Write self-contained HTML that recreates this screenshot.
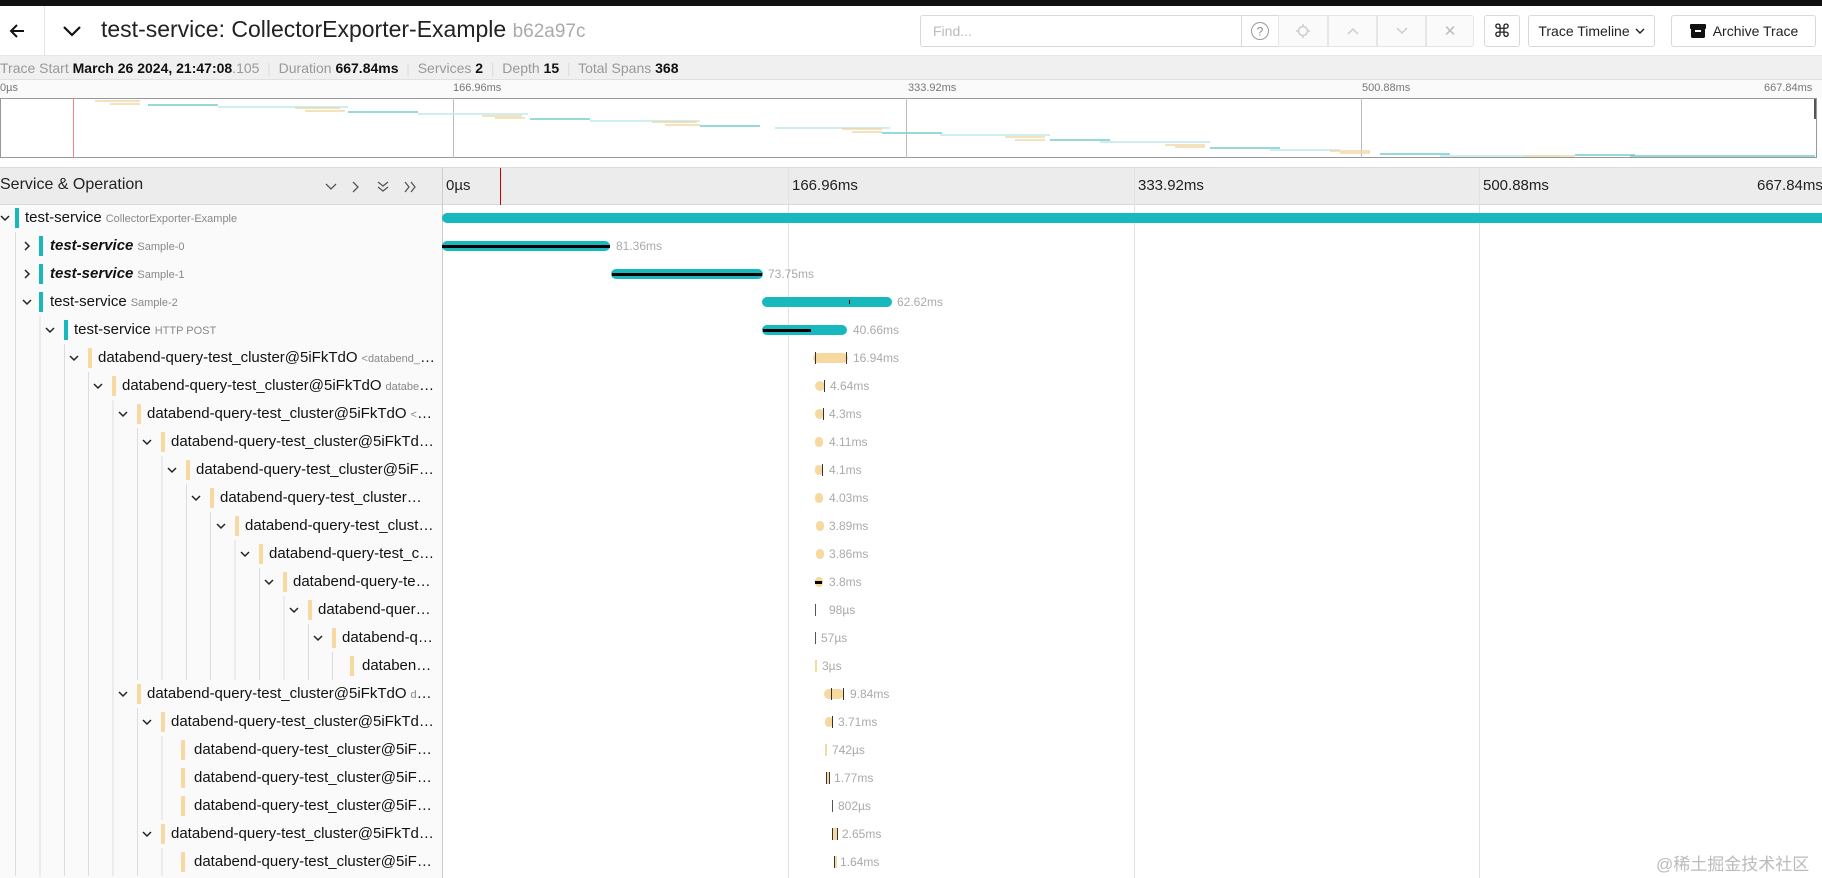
<!DOCTYPE html>
<html><head><meta charset="utf-8"><style>
*{box-sizing:border-box;margin:0;padding:0}
body{width:1822px;height:878px;overflow:hidden;background:#fff;font-family:"Liberation Sans",sans-serif;position:relative;color:#000}
.a{position:absolute}
.btn{position:absolute;top:15px;height:32px;border:1px solid #d9d9d9;border-radius:3px;background:#fff;font-size:15px;display:flex;align-items:center;justify-content:center;color:#222}
.seg{position:absolute;top:15px;height:32px;border:1px solid #e6e6e6;background:#fafafa;color:#bbb;display:flex;align-items:center;justify-content:center;font-size:15px}
.r{position:absolute;left:0;width:1822px;height:28px}
.cb{position:absolute;top:4px;width:4px;height:20px}
.tx{position:absolute;top:5px;font-size:15px;white-space:nowrap;overflow:hidden;text-overflow:ellipsis;color:#111}
.op{font-size:11px;color:#888;margin-left:4px}
.gl{position:absolute;top:0;height:28px;background:repeating-linear-gradient(to right,#ddd 0 1px,transparent 1px 24.4px)}
.ch{position:absolute;top:9px;width:10px;height:10px}
.bar{position:absolute;top:9px;height:10px;border-radius:5px}
.t{background:#17b8be}.y{background:#f7d9a0}
.lb{position:absolute;top:7px;font-size:12px;color:#aaa}
.bl{position:absolute;top:13px;height:3px;background:#000}
.mk{position:absolute;top:8px;width:1px;height:12px;background:#333}
.tick{position:absolute;top:0;width:1px;background:#e2e2e2}
</style></head><body>
<div class="a" style="left:0;top:0;width:1822px;height:6px;background:#111"></div>
<div class="a" style="left:0;top:6px;width:1822px;height:50px;background:#fff;border-bottom:1px solid #e8e8e8"></div>
<div class="a" style="left:44px;top:6px;width:1px;height:50px;background:#e4e4e4"></div>
<svg class="a" style="left:8px;top:22px" width="18" height="18" viewBox="0 0 18 18"><path d="M16 9H3M9 3L3 9l6 6" stroke="#111" stroke-width="2" fill="none"/></svg>
<svg class="a" style="left:62px;top:24px" width="20" height="14" viewBox="0 0 20 14"><path d="M2 3l8 8 8-8" stroke="#111" stroke-width="2.2" fill="none"/></svg>
<div class="a" style="left:101px;top:16px;font-size:23px;color:#222;white-space:nowrap">test-service: CollectorExporter-Example <span style="color:#aaa;font-size:19px">b62a97c</span></div>
<div class="btn" style="left:920px;width:322px;justify-content:flex-start;padding-left:12px;color:#bbb;font-size:14px;border-radius:3px 0 0 3px">Find...</div>
<div class="btn" style="left:1241px;width:38px;border-radius:0;color:#888"><svg width="20" height="20" viewBox="0 0 20 20"><circle cx="10" cy="10" r="8.5" stroke="#999" fill="none"/><text x="10" y="14.5" font-size="12" text-anchor="middle" fill="#888" font-family="Liberation Sans">?</text></svg></div>
<div class="seg" style="left:1278px;width:50px"><svg width="16" height="16" viewBox="0 0 16 16"><circle cx="8" cy="8" r="4.5" stroke="#ccc" fill="none" stroke-width="1.5"/><path d="M8 1v3M8 12v3M1 8h3M12 8h3" stroke="#ccc" stroke-width="1.5"/></svg></div>
<div class="seg" style="left:1328px;width:49px"><svg width="14" height="10"><path d="M2 8l5-5 5 5" stroke="#ccc" stroke-width="1.5" fill="none"/></svg></div>
<div class="seg" style="left:1377px;width:49px"><svg width="14" height="10"><path d="M2 2l5 5 5-5" stroke="#ccc" stroke-width="1.5" fill="none"/></svg></div>
<div class="seg" style="left:1426px;width:48px;border-radius:0 3px 3px 0">✕</div>
<div class="btn" style="left:1484px;width:36px;font-size:18px">⌘</div>
<div class="btn" style="left:1528px;width:127px;font-size:14px">Trace Timeline <svg style="margin-left:5px" width="10" height="8"><path d="M1 2l4 4 4-4" stroke="#222" stroke-width="1.4" fill="none"/></svg></div>
<div class="btn" style="left:1671px;width:145px;font-size:14px"><svg style="margin-right:6px" width="18" height="18" viewBox="0 0 18 18"><rect x="1" y="2" width="16" height="5" rx="1" fill="#111"/><rect x="2" y="6" width="14" height="10" rx="1.5" fill="#111"/><rect x="6" y="8" width="6" height="2" fill="#fff"/></svg>Archive Trace</div>
<div class="a" style="left:0;top:56px;width:1822px;height:24px;background:#f0f0f0;border-bottom:1px solid #e0e0e0"></div>
<div class="a" style="left:0;top:60px;font-size:14px;color:#999;white-space:nowrap">Trace Start <b style="color:#111">March 26 2024, 21:47:08</b>.105 <span style="color:#ddd">&nbsp;|&nbsp;</span> Duration <b style="color:#111">667.84ms</b> <span style="color:#ddd">&nbsp;|&nbsp;</span> Services <b style="color:#111">2</b> <span style="color:#ddd">&nbsp;|&nbsp;</span> Depth <b style="color:#111">15</b> <span style="color:#ddd">&nbsp;|&nbsp;</span> Total Spans <b style="color:#111">368</b></div>
<div class="a" style="left:0;top:80px;width:1822px;height:18px;background:#fafafa"></div>
<div class="a" style="left:0;top:82px;font-size:11px;color:#777">0µs</div>
<div class="a" style="left:453px;top:82px;font-size:11px;color:#777">166.96ms</div>
<div class="a" style="left:908px;top:82px;font-size:11px;color:#777">333.92ms</div>
<div class="a" style="left:1362px;top:82px;font-size:11px;color:#777">500.88ms</div>
<div class="a" style="left:1764px;top:82px;font-size:11px;color:#777">667.84ms</div>
<div class="a" style="left:0;top:98px;width:1817px;height:60px;border:1px solid #999;background:#fff"></div>
<div class="a" style="left:453px;top:98px;width:1px;height:60px;background:#bbb"></div>
<div class="a" style="left:906px;top:98px;width:1px;height:60px;background:#bbb"></div>
<div class="a" style="left:1361px;top:98px;width:1px;height:60px;background:#bbb"></div>
<div class="a" style="left:73px;top:98px;width:1px;height:60px;background:#e88"></div>
<div class="a" style="left:1814px;top:99px;width:2px;height:20px;background:#555"></div>
<svg class="a" style="left:0;top:98px" width="1822" height="60">
<g stroke-width="1.5" fill="none">
<path d="M95 3h45M110 6h30" stroke="#f0d9a8"/><path d="M148 7h70" stroke="#7cc"/><path d="M218 9h130" stroke="#bdeaea"/>
<path d="M295 10h45M305 13h40" stroke="#f0d9a8"/><path d="M348 14h70" stroke="#7cc"/><path d="M418 16h110" stroke="#bdeaea"/>
<path d="M482 18h40M495 20h30" stroke="#f0d9a8"/><path d="M530 21h60" stroke="#7cc"/><path d="M590 23h110" stroke="#bdeaea"/>
<path d="M652 24h45M665 27h35" stroke="#f0d9a8"/><path d="M700 28h60" stroke="#7cc"/><path d="M775 30h115" stroke="#bdeaea"/>
<path d="M842 31h40M852 34h30" stroke="#f0d9a8"/><path d="M882 35h60" stroke="#7cc"/><path d="M940 37h110" stroke="#bdeaea"/>
<path d="M1005 39h40M1015 42h30" stroke="#f0d9a8"/><path d="M1050 42h60" stroke="#7cc"/><path d="M1100 44h110" stroke="#bdeaea"/>
<path d="M1165 47h40M1175 49h30" stroke="#f0d9a8"/><path d="M1210 50h70" stroke="#7cc"/><path d="M1270 52h70" stroke="#bdeaea"/>
<path d="M1330 53h40M1340 55h30" stroke="#f0d9a8"/><path d="M1380 56h70" stroke="#7cc"/><path d="M1440 58h120" stroke="#bdeaea"/>
<path d="M1525 58h50" stroke="#f0d9a8"/><path d="M1575 57h60" stroke="#7cc"/><path d="M1630 58h185" stroke="#7cc"/>
</g></svg>
<div class="a" style="left:0;top:167px;width:1822px;height:38px;background:#ececec;border-top:1px solid #ddd;border-bottom:1px solid #d8d8d8"></div>
<div class="a" style="left:0;top:176px;font-size:16px;color:#222">Service &amp; Operation</div>
<svg class="a" style="left:325px;top:180px" width="100" height="14" viewBox="0 0 100 14">
<g stroke="#555" stroke-width="1.3" fill="none"><path d="M1 4l5 5 5-5"/><path d="M28 2l5 5-5 5"/><path d="M53 2l5 4 5-4M53 7l5 4 5-4"/><path d="M80 2l4 5-4 5M86 2l4 5-4 5"/></g></svg>
<div class="a" style="left:442px;top:167px;width:1px;height:711px;background:#ccc"></div>
<div class="a" style="left:446px;top:177px;font-size:15px;color:#222">0µs</div>
<div class="a" style="left:792px;top:177px;font-size:15px;color:#222">166.96ms</div>
<div class="a" style="left:1138px;top:177px;font-size:15px;color:#222">333.92ms</div>
<div class="a" style="left:1483px;top:177px;font-size:15px;color:#222">500.88ms</div>
<div class="a" style="left:1757px;top:177px;font-size:15px;color:#222">667.84ms</div>
<div class="a" style="left:500px;top:168px;width:1px;height:37px;background:#c00"></div>
<div class="tick" style="left:788px;top:168px;height:710px"></div>
<div class="tick" style="left:1134px;top:168px;height:710px"></div>
<div class="tick" style="left:1479px;top:168px;height:710px"></div>
<div class="a" style="left:0;top:205px;width:442px;height:673px;background:#fafafa"></div>

<div class="r" style="top:204px"><svg class="ch" style="left:0"><path d="M1 3l4 4 4-4" stroke="#222" stroke-width="1.5" fill="none"/></svg><div class="cb t" style="left:15px"></div><div class="tx" style="left:25px;width:412px">test-service<span class="op">CollectorExporter-Example</span></div><div class="bar t" style="left:442px;width:1385px"></div></div>

<div class="r" style="top:232px"><div class="gl" style="left:15px;width:2px"></div><svg class="ch" style="left:22px"><path d="M3 1l4 4-4 4" stroke="#222" stroke-width="1.5" fill="none"/></svg><div class="cb t" style="left:39px"></div><div class="tx" style="left:50px;width:387px"><b><i>test-service</i></b><span class="op">Sample-0</span></div><div class="bar t" style="left:442px;width:168px"></div><div class="bl" style="left:442px;width:168px"></div><div class="lb" style="left:616px">81.36ms</div></div>

<div class="r" style="top:260px"><div class="gl" style="left:15px;width:2px"></div><svg class="ch" style="left:22px"><path d="M3 1l4 4-4 4" stroke="#222" stroke-width="1.5" fill="none"/></svg><div class="cb t" style="left:39px"></div><div class="tx" style="left:50px;width:387px"><b><i>test-service</i></b><span class="op">Sample-1</span></div><div class="bar t" style="left:611px;width:152px"></div><div class="bl" style="left:612px;width:150px"></div><div class="lb" style="left:768px">73.75ms</div></div>

<div class="r" style="top:288px"><div class="gl" style="left:15px;width:2px"></div><svg class="ch" style="left:22px"><path d="M1 3l4 4 4-4" stroke="#222" stroke-width="1.5" fill="none"/></svg><div class="cb t" style="left:39px"></div><div class="tx" style="left:50px;width:387px">test-service<span class="op">Sample-2</span></div><div class="bar t" style="left:762px;width:130px"></div><div class="mk" style="left:849px;top:12px;height:4px;background:#000"></div><div class="lb" style="left:897px">62.62ms</div></div>

<div class="r" style="top:316px"><div class="gl" style="left:15px;width:26px"></div><svg class="ch" style="left:45px"><path d="M1 3l4 4 4-4" stroke="#222" stroke-width="1.5" fill="none"/></svg><div class="cb t" style="left:64px"></div><div class="tx" style="left:74px;width:363px">test-service<span class="op">HTTP POST</span></div><div class="bar t" style="left:762px;width:85px"></div><div class="bl" style="left:763px;width:48px"></div><div class="lb" style="left:853px">40.66ms</div></div>

<div class="r" style="top:344px"><div class="gl" style="left:15px;width:51px"></div><svg class="ch" style="left:69px"><path d="M1 3l4 4 4-4" stroke="#222" stroke-width="1.5" fill="none"/></svg><div class="cb y" style="left:88px"></div><div class="tx" style="left:98px;width:339px">databend-query-test_cluster@5iFkTdO<span class="op">&lt;databend_query::servers::http</span></div><div class="bar y" style="left:813px;width:35px"></div><div class="mk" style="left:815px"></div><div class="mk" style="left:846px"></div><div class="lb" style="left:853px">16.94ms</div></div>

<div class="r" style="top:372px"><div class="gl" style="left:15px;width:75px"></div><svg class="ch" style="left:93px"><path d="M1 3l4 4 4-4" stroke="#222" stroke-width="1.5" fill="none"/></svg><div class="cb y" style="left:112px"></div><div class="tx" style="left:122px;width:315px">databend-query-test_cluster@5iFkTdO<span class="op">databend_query</span></div><div class="bar y" style="left:815px;width:10px"></div><div class="mk" style="left:824px"></div><div class="lb" style="left:830px">4.64ms</div></div>

<div class="r" style="top:400px"><div class="gl" style="left:15px;width:100px"></div><svg class="ch" style="left:118px"><path d="M1 3l4 4 4-4" stroke="#222" stroke-width="1.5" fill="none"/></svg><div class="cb y" style="left:137px"></div><div class="tx" style="left:147px;width:290px">databend-query-test_cluster@5iFkTdO<span class="op">&lt;databend</span></div><div class="bar y" style="left:815px;width:9px"></div><div class="mk" style="left:823px"></div><div class="lb" style="left:829px">4.3ms</div></div>

<div class="r" style="top:428px"><div class="gl" style="left:15px;width:124px"></div><svg class="ch" style="left:142px"><path d="M1 3l4 4 4-4" stroke="#222" stroke-width="1.5" fill="none"/></svg><div class="cb y" style="left:161px"></div><div class="tx" style="left:171px;width:266px">databend-query-test_cluster@5iFkTdO<span class="op">databend</span></div><div class="bar y" style="left:815px;width:8px"></div><div class="lb" style="left:829px">4.11ms</div></div>

<div class="r" style="top:456px"><div class="gl" style="left:15px;width:149px"></div><svg class="ch" style="left:167px"><path d="M1 3l4 4 4-4" stroke="#222" stroke-width="1.5" fill="none"/></svg><div class="cb y" style="left:186px"></div><div class="tx" style="left:196px;width:241px">databend-query-test_cluster@5iFkTdO</div><div class="bar y" style="left:815px;width:8px"></div><div class="mk" style="left:822px"></div><div class="lb" style="left:829px">4.1ms</div></div>

<div class="r" style="top:484px"><div class="gl" style="left:15px;width:173px"></div><svg class="ch" style="left:191px"><path d="M1 3l4 4 4-4" stroke="#222" stroke-width="1.5" fill="none"/></svg><div class="cb y" style="left:210px"></div><div class="tx" style="left:220px;width:217px">databend-query-test_cluster@5iFkTdO</div><div class="bar y" style="left:815px;width:8px"></div><div class="lb" style="left:829px">4.03ms</div></div>

<div class="r" style="top:512px"><div class="gl" style="left:15px;width:198px"></div><svg class="ch" style="left:216px"><path d="M1 3l4 4 4-4" stroke="#222" stroke-width="1.5" fill="none"/></svg><div class="cb y" style="left:235px"></div><div class="tx" style="left:245px;width:192px">databend-query-test_cluster@5iFkTdO</div><div class="bar y" style="left:816px;width:8px"></div><div class="lb" style="left:829px">3.89ms</div></div>

<div class="r" style="top:540px"><div class="gl" style="left:15px;width:222px"></div><svg class="ch" style="left:240px"><path d="M1 3l4 4 4-4" stroke="#222" stroke-width="1.5" fill="none"/></svg><div class="cb y" style="left:259px"></div><div class="tx" style="left:269px;width:168px">databend-query-test_cluster@5iFkTdO</div><div class="bar y" style="left:816px;width:8px"></div><div class="lb" style="left:829px">3.86ms</div></div>

<div class="r" style="top:568px"><div class="gl" style="left:15px;width:246px"></div><svg class="ch" style="left:264px"><path d="M1 3l4 4 4-4" stroke="#222" stroke-width="1.5" fill="none"/></svg><div class="cb y" style="left:283px"></div><div class="tx" style="left:293px;width:144px">databend-query-test_cluster@5iFkTdO</div><div class="bar y" style="left:815px;width:8px"></div><div class="bl" style="left:815px;width:7px"></div><div class="lb" style="left:829px">3.8ms</div></div>

<div class="r" style="top:596px"><div class="gl" style="left:15px;width:271px"></div><svg class="ch" style="left:289px"><path d="M1 3l4 4 4-4" stroke="#222" stroke-width="1.5" fill="none"/></svg><div class="cb y" style="left:308px"></div><div class="tx" style="left:318px;width:119px">databend-query-test_cluster@5iFkTdO</div><div class="mk" style="left:815px;background:#555"></div><div class="lb" style="left:829px">98µs</div></div>

<div class="r" style="top:624px"><div class="gl" style="left:15px;width:295px"></div><svg class="ch" style="left:313px"><path d="M1 3l4 4 4-4" stroke="#222" stroke-width="1.5" fill="none"/></svg><div class="cb y" style="left:332px"></div><div class="tx" style="left:342px;width:95px">databend-query-test_cluster@5iFkTdO</div><div class="mk" style="left:815px;background:#555"></div><div class="lb" style="left:821px">57µs</div></div>

<div class="r" style="top:652px"><div class="gl" style="left:15px;width:320px"></div><div class="cb y" style="left:350px"></div><div class="tx" style="left:362px;width:75px">databend-query-test_cluster@5iFkTdO</div><div class="mk" style="left:815px;width:2px;background:#f7d9a0"></div><div class="lb" style="left:822px">3µs</div></div>

<div class="r" style="top:680px"><div class="gl" style="left:15px;width:100px"></div><svg class="ch" style="left:118px"><path d="M1 3l4 4 4-4" stroke="#222" stroke-width="1.5" fill="none"/></svg><div class="cb y" style="left:137px"></div><div class="tx" style="left:147px;width:290px">databend-query-test_cluster@5iFkTdO<span class="op">databend_query</span></div><div class="bar y" style="left:824px;width:20px"></div><div class="mk" style="left:831px"></div><div class="mk" style="left:843px"></div><div class="lb" style="left:850px">9.84ms</div></div>

<div class="r" style="top:708px"><div class="gl" style="left:15px;width:124px"></div><svg class="ch" style="left:142px"><path d="M1 3l4 4 4-4" stroke="#222" stroke-width="1.5" fill="none"/></svg><div class="cb y" style="left:161px"></div><div class="tx" style="left:171px;width:266px">databend-query-test_cluster@5iFkTdO<span class="op">databend</span></div><div class="bar y" style="left:825px;width:8px"></div><div class="mk" style="left:832px"></div><div class="lb" style="left:838px">3.71ms</div></div>

<div class="r" style="top:736px"><div class="gl" style="left:15px;width:149px"></div><div class="cb y" style="left:181px"></div><div class="tx" style="left:194px;width:243px">databend-query-test_cluster@5iFkTdO</div><div class="mk" style="left:825px;width:2px;background:#f7d9a0"></div><div class="lb" style="left:832px">742µs</div></div>

<div class="r" style="top:764px"><div class="gl" style="left:15px;width:149px"></div><div class="cb y" style="left:181px"></div><div class="tx" style="left:194px;width:243px">databend-query-test_cluster@5iFkTdO</div><div class="mk" style="left:826px;width:4px;background:#f7d9a0;border-left:1px solid #333;border-right:1px solid #333"></div><div class="lb" style="left:834px">1.77ms</div></div>

<div class="r" style="top:792px"><div class="gl" style="left:15px;width:149px"></div><div class="cb y" style="left:181px"></div><div class="tx" style="left:194px;width:243px">databend-query-test_cluster@5iFkTdO</div><div class="mk" style="left:832px;background:#555"></div><div class="lb" style="left:838px">802µs</div></div>

<div class="r" style="top:820px"><div class="gl" style="left:15px;width:124px"></div><svg class="ch" style="left:142px"><path d="M1 3l4 4 4-4" stroke="#222" stroke-width="1.5" fill="none"/></svg><div class="cb y" style="left:161px"></div><div class="tx" style="left:171px;width:266px">databend-query-test_cluster@5iFkTdO<span class="op">databend</span></div><div class="mk" style="left:832px;width:6px;background:#f7d9a0;border-left:1px solid #333;border-right:1px solid #333"></div><div class="lb" style="left:842px">2.65ms</div></div>

<div class="r" style="top:848px"><div class="gl" style="left:15px;width:149px"></div><div class="cb y" style="left:181px"></div><div class="tx" style="left:194px;width:243px">databend-query-test_cluster@5iFkTdO</div><div class="mk" style="left:834px;width:3px;background:#f7d9a0;border-left:1px solid #333"></div><div class="lb" style="left:840px">1.64ms</div></div>

<div class="a" style="left:1656px;top:850px;font-size:17px;color:#bbb;font-family:'Liberation Sans','Noto Sans CJK SC',sans-serif;white-space:nowrap">@稀土掘金技术社区</div>
</body></html>
